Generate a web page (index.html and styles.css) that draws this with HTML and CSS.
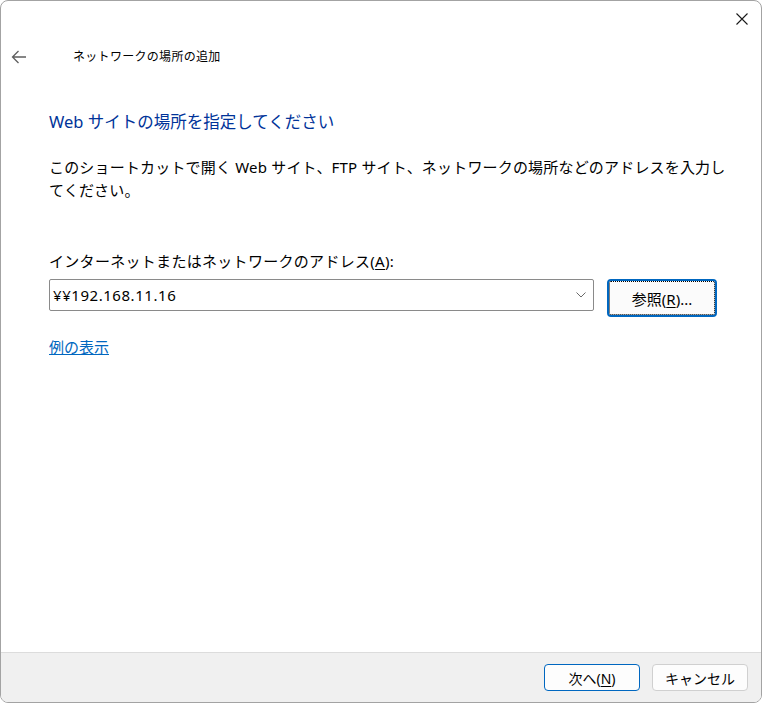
FILE: index.html
```html
<!DOCTYPE html>
<html lang="ja">
<head>
<meta charset="utf-8">
<title>ネットワークの場所の追加</title>
<link rel="stylesheet" href="styles.css">
</head>
<body>
<div class="window">
  <div class="titlebar">
    <span class="close" aria-label="閉じる">
      <svg width="12" height="12" viewBox="0 0 12 12"><path d="M0.5 0.5 L11.5 11.5 M11.5 0.5 L0.5 11.5" stroke="#1a1a1a" stroke-width="1.1" fill="none"/></svg>
    </span>
  </div>
  <div class="nav">
    <span class="back">
      <svg width="16" height="16" viewBox="0 0 16 16"><path d="M15 8 H1.5 M7.5 2 L1.5 8 L7.5 14" stroke="#5f5f5f" stroke-width="1.3" fill="none" stroke-linejoin="miter"/></svg>
    </span>
    <span class="wintitle">ネットワークの場所の追加</span>
  </div>
  <div class="content">
    <h1 class="heading">Web サイトの場所を指定してください</h1>
    <p class="desc">このショートカットで開く Web サイト、FTP サイト、ネットワークの場所などのアドレスを入力し<br>てください。</p>
    <div class="label">インターネットまたはネットワークのアドレス(<u>A</u>):</div>
    <div class="row">
      <div class="combo">
        <span class="combo-text">¥¥192.168.11.16</span>
        <svg class="chev" width="10" height="6" viewBox="0 0 10 6"><path d="M0.5 0.5 L5 5 L9.5 0.5" stroke="#6a6a6a" stroke-width="1" fill="none"/></svg>
      </div>
      <button class="btn browse">参照(<u>R</u>)...</button>
    </div>
    <a class="example" href="#">例の表示</a>
  </div>
  <div class="footer">
    <button class="btn fbtn primary">次へ(<u>N</u>)</button>
    <button class="btn fbtn">キャンセル</button>
  </div>
</div>
</body>
</html>
```
FILE: styles.css
```css
html, body {
  margin: 0;
  padding: 0;
  background: #ffffff;
}
body {
  font-family: "Noto Sans", "Noto Sans CJK JP", sans-serif;
  color: #000;
}
.window {
  box-sizing: border-box;
  width: 762px;
  height: 703px;
  border: 1px solid #a3a3a3;
  border-radius: 8px;
  overflow: hidden;
  display: flex;
  flex-direction: column;
  background: #fff;
}
.titlebar {
  height: 44px;
  display: flex;
  justify-content: flex-end;
  align-items: flex-start;
  box-sizing: border-box;
  padding: 12px 13px 0 0;
}
.close {
  display: block;
  width: 12px;
  height: 12px;
}
.close svg { display: block; }
.nav {
  height: 24px;
  display: flex;
  align-items: center;
  padding-left: 10px;
}
.back {
  width: 16px;
  height: 16px;
  display: block;
}
.back svg { display: block; }
.wintitle {
  margin-left: 46px;
  font-size: 12px;
  letter-spacing: 0.3px;
  line-height: 24px;
  color: #000;
}
.content {
  padding-left: 48px;
  display: flex;
  flex-direction: column;
  align-items: flex-start;
}
.heading {
  margin: 41px 0 0 0;
  font-size: 16.5px;
  font-weight: normal;
  line-height: 24px;
  color: #003399;
}
.desc {
  margin: 22px 0 0 0;
  font-size: 15px;
  letter-spacing: 0.18px;
  line-height: 23px;
  width: 700px;
}
.label {
  margin-top: 48px;
  font-size: 15px;
  letter-spacing: 0.3px;
  line-height: 22px;
}
.label u, .btn u { text-underline-offset: 2px; }
.row {
  margin-top: 7px;
  display: flex;
  align-items: flex-start;
  gap: 13px;
}
.combo {
  box-sizing: border-box;
  width: 545px;
  height: 32px;
  border: 1px solid #8a8a8a;
  border-radius: 2px;
  display: flex;
  align-items: center;
  justify-content: space-between;
  padding: 0 7px 0 3px;
  background: #fff;
}
.combo-text {
  font-size: 15px;
  letter-spacing: 0.55px;
  line-height: 20px;
}
.chev { display: block; }
.btn {
  font-family: "Noto Sans", "Noto Sans CJK JP", sans-serif;
  color: #000;
  background: #fdfdfd;
  cursor: default;
  padding: 0;
}
.browse {
  box-sizing: border-box;
  width: 110px;
  height: 38px;
  border: 2px solid #0067c0;
  border-radius: 4px;
  outline: 1px dotted #000;
  outline-offset: -3px;
  font-size: 15px;
  background: #fbfbfb;
}
.example {
  margin-top: 20px;
  font-size: 15px;
  line-height: 20px;
  color: #0067c0;
  text-decoration: underline;
}
.footer {
  margin-top: auto;
  height: 50px;
  box-sizing: border-box;
  border-top: 1px solid #dcdcdc;
  background: #f0f0f0;
  display: flex;
  justify-content: flex-end;
  align-items: flex-start;
  gap: 12px;
  padding: 11px 13px 0 0;
}
.fbtn {
  box-sizing: border-box;
  width: 96px;
  height: 27px;
  border: 1px solid #d0d0d0;
  border-radius: 4px;
  font-size: 14px;
  background: #fdfdfd;
}
.fbtn.primary {
  border-color: #0067c0;
}
```
